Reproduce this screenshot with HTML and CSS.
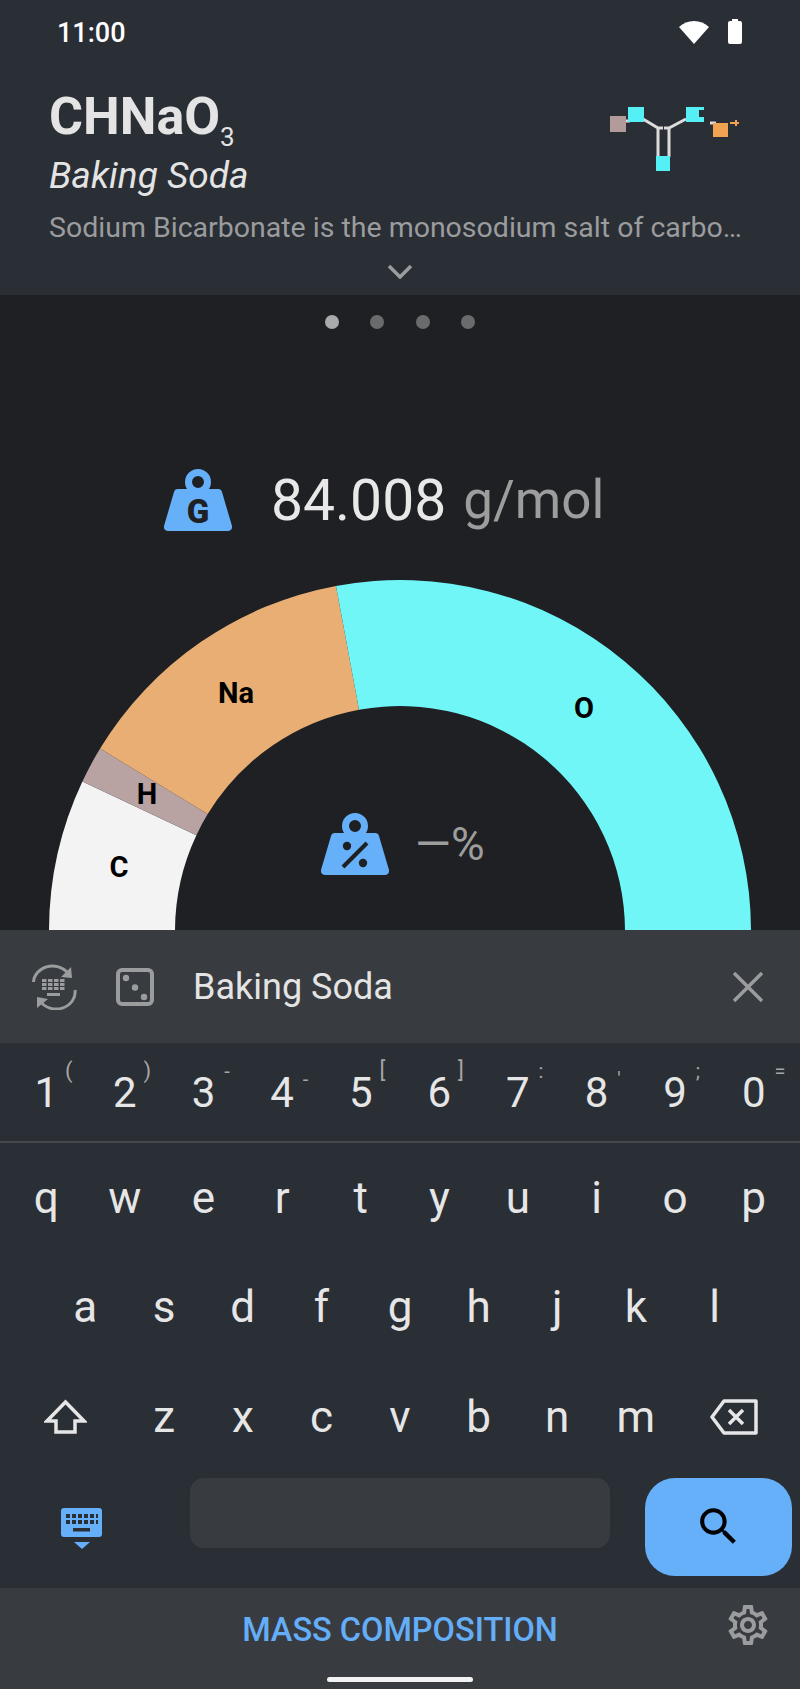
FILE: index.html
```html
<!DOCTYPE html>
<html lang="en">
  <head>
    <meta charset="UTF-8" />
    <meta name="viewport" content="width=device-width, initial-scale=1.0" />
    <title>Baking Soda</title>

    <link rel="stylesheet" href="styles.css">
  </head>
  <body>
    <svg class="defs" width="0" height="0">
      <symbol id="weight" viewBox="0 0 68 62">
        <circle cx="34" cy="13" r="9.5" fill="none" stroke="#66b0fa" stroke-width="7" />
        <path fill="#66b0fa" d="M14 20H54a4 4 0 0 1 4 3L68 57a4 4 0 0 1-4 5H4a4 4 0 0 1-4-5L10 23a4 4 0 0 1 4-3z" />
      </symbol>
    </svg>

    <div class="phone">
      <header class="header">
        <div class="status-bar">
          <span class="clock">11:00</span>
          <div class="status-icons">
            <svg class="wifi" viewBox="0 0 30 23"><path fill="#fff" d="M0 6C8-2 22-2 30 6L15 23z" /></svg>
            <svg class="battery" viewBox="0 0 14 25"><path fill="#fff" d="M4 0h6v2h2a2 2 0 0 1 2 2v19a2 2 0 0 1-2 2H2a2 2 0 0 1-2-2V4a2 2 0 0 1 2-2h2z" /></svg>
          </div>
        </div>
        <div class="compound">
          <div class="compound-names">
            <h1 class="formula">CHNaO<sub>3</sub></h1>
            <h2 class="common-name">Baking Soda</h2>
          </div>
          <svg class="molecule" viewBox="0 0 130 64">
            <path fill="none" stroke="#dcdcdc" stroke-width="3" d="M33 12L48 21L53 21M76 12L59 21L54 21M48 21V50M59 21V50M14 14H20M100 16H106" />
            <rect x="0" y="9" width="16" height="16" fill="#b39b9b" />
            <rect x="18" y="0" width="16" height="15" fill="#55f0f5" />
            <path fill="#55f0f5" d="M76 0H94V3H89V10H94V15H76z" />
            <rect x="46" y="49" width="14" height="15" fill="#55f0f5" />
            <path fill="#f2a352" d="M103 16H118V30H103zM120 15H125V13H127V15H129V17H127V19H125V17H120z" />
          </svg>
        </div>
        <p class="description">Sodium Bicarbonate is the monosodium salt of carbonic acid with alkalinizing and electrolyte replacement properties.</p>
        <svg class="chevron" viewBox="0 0 26 15"><path fill="none" stroke="#9b9c9e" stroke-width="3.5" d="M2 2L13 13L24 2" /></svg>
      </header>

      <main class="content">
        <div class="pager">
          <span class="dot active"></span>
          <span class="dot"></span>
          <span class="dot"></span>
          <span class="dot"></span>
        </div>

        <div class="mass">
          <svg class="weight-icon" viewBox="0 0 68 62">
            <use href="#weight" width="68" height="62" />
            <text class="weight-letter" x="34" y="54" text-anchor="middle">G</text>
          </svg>
          <span class="mass-value">84.008</span>
          <span class="mass-unit">g/mol</span>
        </div>

        <div class="chart">
          <svg class="chart-arc" viewBox="0 0 800 350">
            <path fill="#f3f3f3" d="M49 351A351 351 0 0 1 82.4 201.5L196.4 255.2A225 225 0 0 0 175 351z" />
            <path fill="#b8a2a2" d="M82.4 201.5A351 351 0 0 1 100.1 168.6L207.7 234.1A225 225 0 0 0 196.4 255.2z" />
            <path fill="#e9ae73" d="M100.1 168.6A351 351 0 0 1 336 5.9L359 129.8A225 225 0 0 0 207.7 234.1z" />
            <path fill="#70f6f6" d="M336 5.9A351 351 0 0 1 751 351H625A225 225 0 0 0 359 129.8z" />
            <text class="slice-label" x="236" y="123">Na</text>
            <text class="slice-label" x="584" y="138">O</text>
            <text class="slice-label" x="147" y="224">H</text>
            <text class="slice-label" x="119" y="297">C</text>
          </svg>
          <div class="percent">
            <svg class="weight-icon" viewBox="0 0 68 62">
              <use href="#weight" width="68" height="62" />
              <circle cx="26" cy="33" r="4.2" fill="#1f2023" />
              <circle cx="42" cy="50" r="4.2" fill="#1f2023" />
              <path stroke="#1f2023" stroke-width="4" d="M22 54L46 30" />
            </svg>
            <span class="percent-value">—%</span>
          </div>
        </div>
      </main>

      <section class="suggestion-bar">
        <svg class="swap-icon" viewBox="0 0 48 47">
          <g fill="none" stroke="#9b9c9e" stroke-width="3">
            <path d="M3.5 19A19 17 0 0 1 37 9" />
            <path d="M45 27A19 17 0 0 1 10 38" />
          </g>
          <path fill="#9b9c9e" d="M41 4L42 15L31 14zM7 34L18 36L7 45z" />
          <path stroke="#9b9c9e" stroke-width="3" stroke-dasharray="4.5 1.5" d="M12 17.5H36M12 21.5H36M12 25.5H36" />
          <rect x="17" y="30" width="13" height="3" fill="#9b9c9e" />
        </svg>
        <svg class="dice-icon" viewBox="0 0 38 38">
          <rect x="2" y="2" width="34" height="34" rx="4" fill="none" stroke="#9b9c9e" stroke-width="4" />
          <circle cx="10" cy="10" r="3.2" fill="#9b9c9e" />
          <circle cx="19" cy="19.5" r="3.2" fill="#9b9c9e" />
          <circle cx="28" cy="29" r="3.2" fill="#9b9c9e" />
        </svg>
        <span class="query">Baking Soda</span>
        <svg class="close-icon" viewBox="0 0 30 30"><path stroke="#9b9c9e" stroke-width="3.5" d="M1 1L29 29M29 1L1 29" /></svg>
      </section>

      <section class="keyboard">
        <div class="key-row number-row">
          <span class="key">1<i class="hint">(</i></span>
          <span class="key">2<i class="hint">)</i></span>
          <span class="key">3<i class="hint hint-dash">-</i></span>
          <span class="key">4<i class="hint hint-low">-</i></span>
          <span class="key">5<i class="hint">[</i></span>
          <span class="key">6<i class="hint">]</i></span>
          <span class="key">7<i class="hint hint-dash">:</i></span>
          <span class="key">8<i class="hint hint-low">'</i></span>
          <span class="key">9<i class="hint hint-dash">;</i></span>
          <span class="key">0<i class="hint hint-dash">=</i></span>
        </div>
        <div class="key-row letter-row">
          <span class="key">q</span><span class="key">w</span><span class="key">e</span><span class="key">r</span><span class="key">t</span>
          <span class="key">y</span><span class="key">u</span><span class="key">i</span><span class="key">o</span><span class="key">p</span>
        </div>
        <div class="key-row letter-row home-row">
          <span class="key">a</span><span class="key">s</span><span class="key">d</span><span class="key">f</span><span class="key">g</span>
          <span class="key">h</span><span class="key">j</span><span class="key">k</span><span class="key">l</span>
        </div>
        <div class="key-row letter-row shift-row">
          <span class="key">
            <svg class="shift-icon" viewBox="0 0 43 35"><path fill="none" stroke="#e6e6e6" stroke-width="3.5" d="M21.5 3L40 22H31V33H12V22H3z" /></svg>
          </span>
          <span class="key">z</span><span class="key">x</span><span class="key">c</span><span class="key">v</span>
          <span class="key">b</span><span class="key">n</span><span class="key">m</span>
          <span class="key">
            <svg class="backspace-icon" viewBox="0 0 48 36">
              <path fill="none" stroke="#e6e6e6" stroke-width="3.5" stroke-linejoin="round" d="M46 2H14L2 18L14 34H46z" />
              <path stroke="#e6e6e6" stroke-width="3.5" d="M19 11L33 25M33 11L19 25" />
            </svg>
          </span>
        </div>
        <div class="action-row">
          <div class="keyboard-toggle">
            <svg class="keyboard-icon" viewBox="0 0 42 41">
              <rect width="41" height="29" rx="3" fill="#66b0fa" />
              <path stroke="#2a2e35" stroke-width="4" stroke-dasharray="4 2" d="M5 8H37M5 14H37" />
              <rect x="12" y="20" width="17" height="3.5" fill="#2a2e35" />
              <path fill="#66b0fa" d="M13 34H29L21 41z" />
            </svg>
          </div>
          <div class="space-key"></div>
          <div class="search-key">
            <svg class="search-icon" viewBox="0 0 24 24"><path d="M15.5 14h-.79l-.28-.27C15.41 12.59 16 11.11 16 9.5 16 5.91 13.09 3 9.5 3S3 5.91 3 9.5 5.91 16 9.5 16c1.61 0 3.09-.59 4.23-1.57l.27.28v.79l5 4.99L20.49 19l-4.99-5zm-6 0C7.01 14 5 11.99 5 9.5S7.01 5 9.5 5 14 7.01 14 9.5 11.99 14 9.5 14z" /></svg>
          </div>
        </div>
      </section>

      <footer class="footer">
        <div class="tab-row">
          <span class="tab-title">MASS COMPOSITION</span>
          <svg class="gear-icon" viewBox="0 0 24 24"><path fill="#9b9c9e" d="M19.43 12.98c.04-.32.07-.64.07-.98 0-.34-.03-.66-.07-.98l2.11-1.65c.19-.15.24-.42.12-.64l-2-3.46c-.09-.16-.26-.25-.44-.25-.06 0-.12.01-.17.03l-2.49 1c-.52-.4-1.08-.73-1.69-.98l-.38-2.65C14.46 2.18 14.25 2 14 2h-4c-.25 0-.46.18-.49.42l-.38 2.65c-.61.25-1.17.59-1.69.98l-2.49-1c-.06-.02-.12-.03-.18-.03-.17 0-.34.09-.43.25l-2 3.46c-.13.22-.07.49.12.64l2.11 1.65c-.04.32-.07.65-.07.98 0 .33.03.66.07.98l-2.11 1.65c-.19.15-.24.42-.12.64l2 3.46c.09.16.26.25.44.25.06 0 .12-.01.17-.03l2.49-1c.52.4 1.08.73 1.69.98l.38 2.65c.03.24.24.42.49.42h4c.25 0 .46-.18.49-.42l.38-2.65c.61-.25 1.17-.59 1.69-.98l2.49 1c.06.02.12.03.18.03.17 0 .34-.09.43-.25l2-3.46c.12-.22.07-.49-.12-.64l-2.11-1.65zm-1.98-1.71c.04.31.05.52.05.73 0 .21-.02.43-.05.73l-.14 1.13.89.7 1.08.84-.7 1.21-1.27-.51-1.04-.42-.9.68c-.43.32-.84.56-1.25.73l-1.06.43-.16 1.13-.2 1.35h-1.4l-.19-1.35-.16-1.13-1.06-.43c-.43-.18-.83-.41-1.23-.71l-.91-.7-1.06.43-1.27.51-.7-1.21 1.08-.84.89-.7-.14-1.13c-.03-.31-.05-.54-.05-.74s.02-.43.05-.73l.14-1.13-.89-.7-1.08-.84.7-1.21 1.27.51 1.04.42.9-.68c.43-.32.84-.56 1.25-.73l1.06-.43.16-1.13.2-1.35h1.39l.19 1.35.16 1.13 1.06.43c.43.18.83.41 1.23.71l.91.7 1.06-.43 1.27-.51.7 1.21-1.07.85-.89.7.14 1.13zM12 8c-2.21 0-4 1.79-4 4s1.79 4 4 4 4-1.79 4-4-1.79-4-4-4zm0 6c-1.1 0-2-.9-2-2s.9-2 2-2 2 .9 2 2-.9 2-2 2z" /></svg>
        </div>
        <div class="home-bar"></div>
      </footer>
    </div>
  </body>
</html>
```

FILE: styles.css
```css
* {
  box-sizing: border-box;
}

body {
  margin: 0;
  background-color: #1f2023;
  font-family: Roboto, "Liberation Sans", sans-serif;
}

svg {
  display: block;
}

.defs {
  position: absolute;
}

.phone {
  display: flex;
  flex-direction: column;
  width: 800px;
  height: 1689px;
  overflow: hidden;
}

/* header */
.header {
  height: 295px;
  flex: none;
  padding: 0 49px;
  background-color: #2a2e35;
}

.status-bar {
  display: flex;
  justify-content: space-between;
  height: 87px;
  padding: 17px 9px 0 8px;
}

.clock {
  font-size: 27px;
  line-height: 32px;
  font-weight: 500;
  color: #ffffff;
}

.status-icons {
  display: flex;
  align-items: flex-start;
  gap: 19px;
  padding-top: 2px;
}

.wifi {
  width: 30px;
  height: 23px;
  margin-top: 2px;
}

.battery {
  width: 14px;
  height: 25px;
}

.compound {
  display: flex;
  justify-content: space-between;
}

.formula {
  margin: 0;
  height: 60px;
  font-size: 52px;
  line-height: 60px;
  font-weight: 700;
  color: #e4e4e4;
}

.formula sub {
  font-size: 26px;
  font-weight: 400;
  line-height: 0;
  vertical-align: -12px;
}

.common-name {
  margin: 9px 0 0 0;
  font-size: 37px;
  line-height: 40px;
  font-weight: 400;
  font-style: italic;
  color: #e4e4e4;
}

.molecule {
  width: 130px;
  height: 64px;
  margin: 20px 11px 0 0;
}

.description {
  margin: 15px 0 0 0;
  font-size: 28.5px;
  line-height: 34px;
  color: #9b9c9e;
  white-space: nowrap;
  overflow: hidden;
  text-overflow: ellipsis;
}

.chevron {
  width: 26px;
  height: 15px;
  margin: 19px auto 0 auto;
}

/* content */
.content {
  height: 635px;
  flex: none;
  overflow: hidden;
}

.pager {
  display: flex;
  justify-content: center;
  gap: 31.5px;
  padding-top: 20px;
}

.dot {
  width: 14px;
  height: 14px;
  border-radius: 50%;
  background-color: #6a6b6d;
}

.dot.active {
  background-color: #a9aaab;
}

.mass {
  display: flex;
  align-items: center;
  height: 66px;
  margin-top: 138px;
  padding-left: 164px;
}

.weight-icon {
  width: 68px;
  height: 62px;
  flex: none;
}

.weight-letter {
  font-size: 33px;
  font-weight: 900;
  fill: #1f2023;
}

.mass-value {
  margin-left: 39px;
  font-size: 57px;
  color: #e8e8e8;
}

.mass-unit {
  margin-left: 17px;
  font-size: 53px;
  color: #9d9d9d;
}

.chart {
  position: relative;
  margin-top: 47px;
}

.chart-arc {
  width: 800px;
  height: 350px;
}

.slice-label {
  font-size: 29px;
  font-weight: 700;
  text-anchor: middle;
  fill: #000000;
}

.percent {
  position: absolute;
  left: 321px;
  top: 233px;
  display: flex;
  align-items: center;
  gap: 26px;
}

.percent-value {
  font-size: 46px;
  line-height: 54px;
  color: #9d9d9d;
}

/* suggestion bar */
.suggestion-bar {
  display: flex;
  align-items: center;
  height: 113px;
  flex: none;
  padding: 0 37px 0 30px;
  background-color: #383c40;
}

.swap-icon {
  width: 48px;
  height: 47px;
}

.dice-icon {
  width: 38px;
  height: 38px;
  margin-left: 38px;
}

.query {
  flex: 1;
  margin-left: 39px;
  font-size: 36px;
  color: #e4e4e4;
}

.close-icon {
  width: 30px;
  height: 30px;
}

/* keyboard */
.keyboard {
  flex: none;
  background-color: #2a2e35;
}

.key-row {
  display: grid;
  grid-template-columns: repeat(10, 1fr);
  padding: 0 7px;
}

.key {
  position: relative;
  display: flex;
  align-items: center;
  justify-content: center;
  color: #e6e6e6;
}

.number-row {
  height: 100px;
  border-bottom: 2px solid #45494e;
  font-size: 42px;
}

.hint {
  position: absolute;
  left: 58px;
  top: 15px;
  font-size: 22px;
  font-style: normal;
  color: #a5a6a8;
}

.hint-dash {
  top: 16px;
  left: 60px;
  font-size: 20px;
}

.hint-low {
  top: 24px;
  left: 60px;
  font-size: 20px;
}

.letter-row {
  height: 109.5px;
  font-size: 44px;
}

.home-row {
  grid-template-columns: repeat(9, 1fr);
  padding: 0 46px;
}

.shift-row {
  grid-template-columns: 1.5fr repeat(7, 1fr) 1.5fr;
}

.shift-icon {
  width: 43px;
  height: 35px;
}

.backspace-icon {
  width: 48px;
  height: 36px;
}

.action-row {
  display: flex;
  align-items: flex-start;
  height: 116px;
  padding: 6px 8px 0 0;
}

.keyboard-toggle {
  width: 190px;
  padding: 30px 0 0 61px;
}

.keyboard-icon {
  width: 42px;
  height: 41px;
}

.space-key {
  width: 420px;
  height: 70px;
  border-radius: 14px;
  background-color: #383c40;
}

.search-key {
  display: flex;
  align-items: center;
  justify-content: center;
  width: 147px;
  height: 98px;
  margin-left: 35px;
  border-radius: 30px;
  background-color: #66b0fa;
}

.search-icon {
  width: 49px;
  height: 49px;
}

/* footer */
.footer {
  flex: 1;
  background-color: #383c40;
}

.tab-row {
  position: relative;
  display: flex;
  justify-content: center;
  padding-top: 20px;
}

.tab-title {
  font-size: 32.5px;
  line-height: 44px;
  font-weight: 500;
  color: #64aef8;
}

.gear-icon {
  position: absolute;
  left: 724px;
  top: 13px;
  width: 48px;
  height: 48px;
}

.home-bar {
  width: 146px;
  height: 5px;
  margin: 25px auto 0 auto;
  border-radius: 3px;
  background-color: #f2f2f2;
}
```
